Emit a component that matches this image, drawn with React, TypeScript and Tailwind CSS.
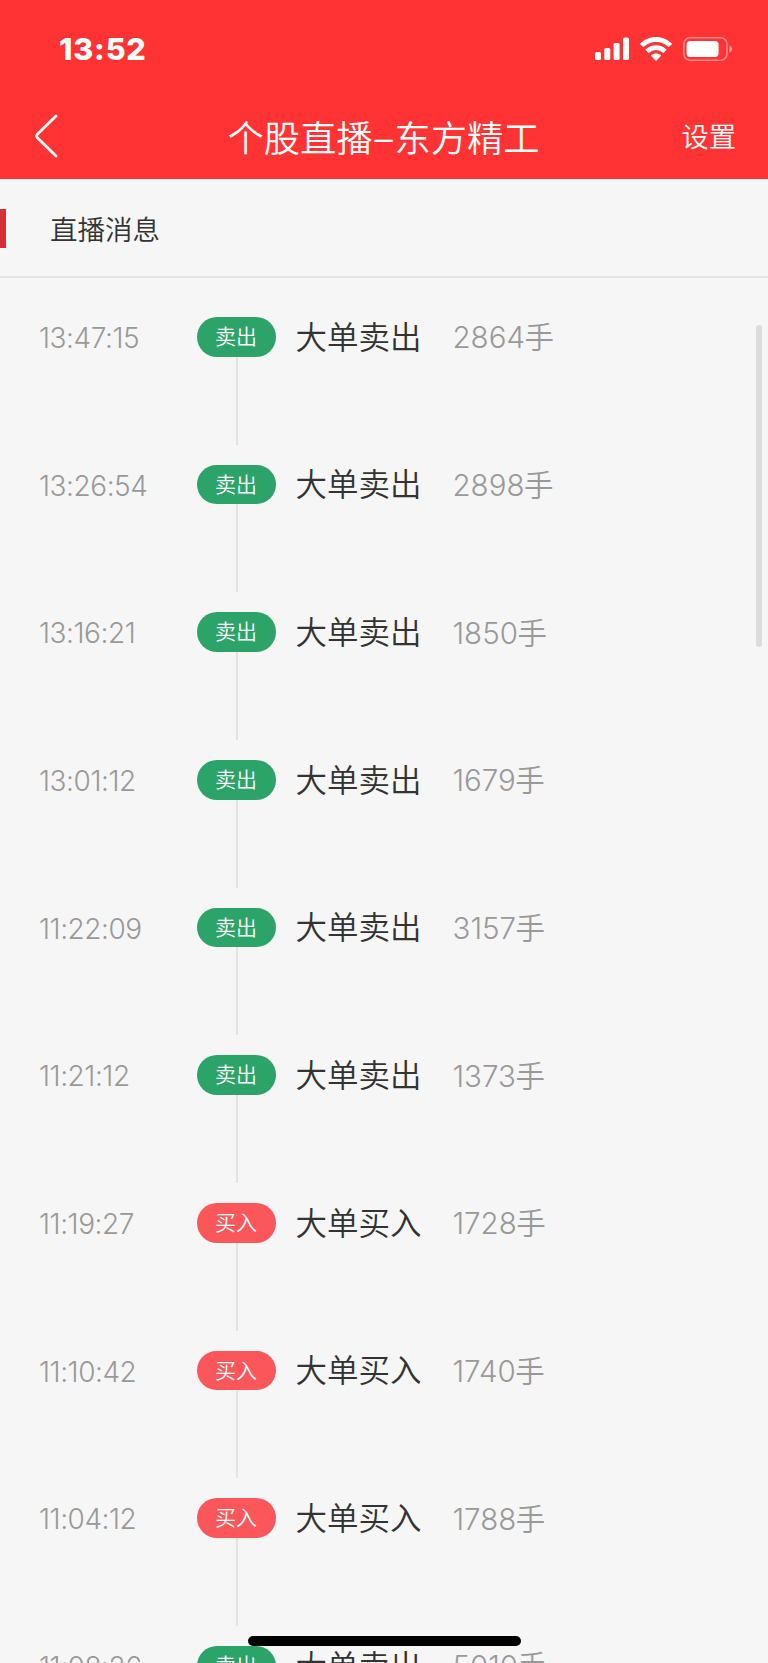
type Side = 'sell' | 'buy';

interface Message {
  time: string;
  side: Side;
  volume: number;
}

const messages: Message[] = [
  { time: '13:47:15', side: 'sell', volume: 2864 },
  { time: '13:26:54', side: 'sell', volume: 2898 },
  { time: '13:16:21', side: 'sell', volume: 1850 },
  { time: '13:01:12', side: 'sell', volume: 1679 },
  { time: '11:22:09', side: 'sell', volume: 3157 },
  { time: '11:21:12', side: 'sell', volume: 1373 },
  { time: '11:19:27', side: 'buy', volume: 1728 },
  { time: '11:10:42', side: 'buy', volume: 1740 },
  { time: '11:04:12', side: 'buy', volume: 1788 },
  { time: '11:08:26', side: 'sell', volume: 5010 },
];

const sideStyles: Record<Side, { label: string; pill: string }> = {
  sell: { label: '卖出', pill: 'bg-[#2ca368]' },
  buy: { label: '买入', pill: 'bg-[#fb575a]' },
};

function SignalIcon() {
  return (
    <svg width="34" height="24" viewBox="0 0 34 24" fill="white">
      <rect x="0" y="15" width="6" height="8" rx="1.6" />
      <rect x="9.3" y="11" width="6" height="12" rx="1.6" />
      <rect x="18.6" y="6" width="6" height="17" rx="1.6" />
      <rect x="28" y="0.6" width="6" height="22.4" rx="1.6" />
    </svg>
  );
}

function WifiIcon() {
  return (
    <svg width="32" height="24" viewBox="0 0 32 24" fill="white">
      <path d="M16 0C22 0 27.500 2.300 31.600 6.300Q32.100 6.900 31.600 7.400L29.200 9.800Q28.700 10.200 28.200 9.800A17.600 17.600 0 0 0 3.800 9.800Q3.300 10.200 2.800 9.800L0.400 7.400Q-0.100 6.900 0.400 6.300C4.500 2.300 10 0 16 0Z" />
      <path d="M16 8.300C19.900 8.300 23.500 9.700 26.200 12.200Q26.800 12.800 26.200 13.300L23.800 15.700Q23.300 16.100 22.800 15.700A10 10 0 0 0 9.200 15.700Q8.700 16.100 8.200 15.700L5.800 13.300Q5.200 12.800 5.800 12.200C8.500 9.700 12.100 8.300 16 8.300Z" />
      <path d="M16 16.400C17.800 16.400 19.500 17 20.800 18Q21.400 18.500 20.800 19.100L16.600 23.400Q16 23.900 15.400 23.400L11.200 19.100Q10.600 18.500 11.200 18C12.500 17 14.200 16.400 16 16.400Z" />
    </svg>
  );
}

function BatteryIcon() {
  return (
    <svg width="50" height="24" viewBox="0 0 50 24" fill="none">
      <rect x="0.8" y="0.8" width="43.200" height="22.400" rx="6.200" stroke="white" strokeOpacity="0.42" strokeWidth="1.600" />
      <rect x="3.600" y="3.900" width="32" height="16.200" rx="3.600" fill="white" />
      <path d="M46.400 8.200C48 8.900 49 10.300 49 12S48 15.100 46.400 15.800Z" fill="white" fillOpacity="0.5" />
    </svg>
  );
}

function Header() {
  return (
    <header className="h-[179.3px] shrink-0 bg-[#ff3333] text-white">
      <div className="flex h-[97px] items-center justify-between pr-[35px] pl-[59px]">
        <span className="pt-px text-[30.500px] leading-[30px] font-extrabold tracking-[0.800px]">13:52</span>
        <div className="flex items-center">
          <SignalIcon />
          <span className="w-[11px]" />
          <WifiIcon />
          <span className="w-[11px]" />
          <BatteryIcon />
        </div>
      </div>
      <div className="grid h-[82px] grid-cols-[1fr_auto_1fr] items-center pr-[32px] pl-[35px] font-[350]">
        <svg width="24" height="44" viewBox="0 0 24 44" fill="none" className="-mt-[5px]">
          <path d="M21 2L2.400 20.300Q1 22 2.400 23.700L21 42" stroke="white" strokeWidth="2.800" strokeLinecap="round" strokeLinejoin="round" />
        </svg>
        <h1 className="mr-[4px] flex pt-[2px] text-[36.300px] leading-[40px]">
          <span>个股直播</span>
          <span className="w-[21.800px] text-center font-light">–</span>
          <span>东方精工</span>
        </h1>
        <span className="justify-self-end text-[27.300px] leading-[30px]">设置</span>
      </div>
    </header>
  );
}

function MessageRow({ time, side, volume }: Message) {
  const { label, pill } = sideStyles[side];
  return (
    <li className="flex h-[147.670px] shrink-0 items-start leading-[39.670px]">
      <span className="w-[158px] pt-[2px] text-[28px] font-[330] tracking-[-0.450px] text-[#999999]">{time}</span>
      <div className="flex w-[79px] flex-col items-center">
        <span className={`h-[39.670px] w-full rounded-full pr-px text-center text-[21px] font-[350] text-white ${pill}`}>{label}</span>
        <span className="ml-px h-[88px] w-[1.500px] bg-[#e3e3e3]" />
      </div>
      <span className="ml-[19.500px] w-[157px] pt-[0.700px] text-[31.500px] font-[350] text-[#333333]">大单{label}</span>
      <span className="pt-[1.500px] text-[29.500px] font-[330] text-[#999999]">
        {volume}
        <span className="-ml-[0.500px] font-[350]">手</span>
      </span>
    </li>
  );
}

export default function App() {
  return (
    <div className="relative flex h-[1663px] w-[768px] flex-col overflow-hidden bg-[#f6f6f6] font-['Inter','Noto_Sans_CJK_SC',sans-serif]">
      <Header />
      <section className="flex h-[98.700px] shrink-0 items-center border-b-2 border-[#e4e4e4] pt-[2.500px]">
        <span className="-mt-px h-[39.500px] w-1.5 bg-[#d63033]" />
        <h2 className="ml-[44px] pt-[2px] text-[27.500px] leading-[40px] font-[350] text-[#333333]">直播消息</h2>
      </section>
      <ul className="flex flex-col pt-[39px] pl-[39px]">
        {messages.map((message) => (
          <MessageRow key={message.time} {...message} />
        ))}
      </ul>
      <span className="absolute top-[325px] left-[756px] h-[322px] w-1.5 rounded-full bg-[#dcdcdc]" />
      <span className="absolute bottom-[17px] left-[247.500px] h-[10px] w-[273.500px] rounded-full bg-black" />
    </div>
  );
}
